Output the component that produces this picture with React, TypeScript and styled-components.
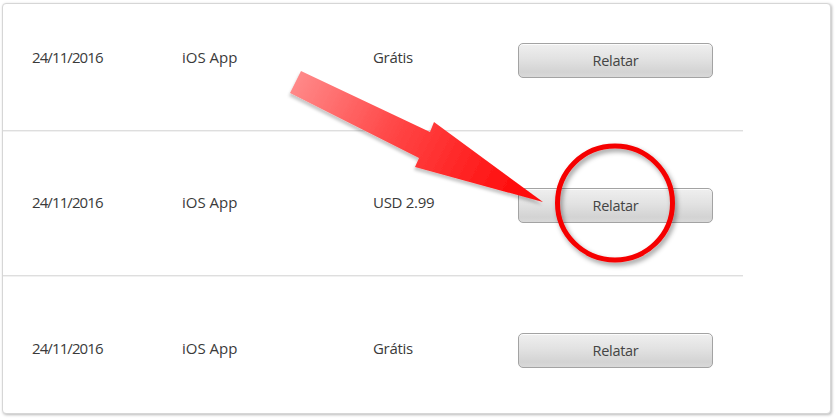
import React from "react";
import styled, { createGlobalStyle } from "styled-components";

const Global = createGlobalStyle`
  html, body { margin: 0; padding: 0; background: #ffffff; }
  body { width: 836px; height: 419px; overflow: hidden; font-family: "Open Sans", "Noto Sans", sans-serif; }
`;

const Stage = styled.div`
  position: relative;
  width: 836px;
  height: 419px;
  padding: 3px 0 0 2px;
  box-sizing: border-box;
`;

const Card = styled.div`
  width: 829px;
  height: 411px;
  box-sizing: border-box;
  background: #fff;
  border: 1px solid #d6d6d6;
  border-radius: 4px;
  box-shadow: 1px 1px 3px rgba(0, 0, 0, 0.28);
  overflow: hidden;
`;

const List = styled.div`
  display: flex;
  flex-direction: column;
  margin-top: -18px;
`;

const Row = styled.div<{ $last?: boolean }>`
  display: grid;
  grid-template-columns: 150px 191px 145px 195px;
  align-items: center;
  width: 740px;
  height: 145px;
  box-sizing: border-box;
  padding: 4px 0 0 29px;
  border-bottom: ${(p) => (p.$last ? "none" : "1px solid #dedede")};
  box-shadow: ${(p) => (p.$last ? "none" : "0 1px 0 #f1f1f1")};
`;

const Cell = styled.div<{ $spacing?: number }>`
  font-size: 15px;
  letter-spacing: ${(p) => p.$spacing ?? 0}px;
  color: #3a3a3a;
  margin-bottom: 6px;
  white-space: nowrap;
`;

const ReportButton = styled.button`
  width: 195px;
  height: 35px;
  box-sizing: border-box;
  border: 1px solid #a3a3a3;
  border-radius: 5px;
  background: linear-gradient(to bottom, #efefef 0%, #e2e2e2 45%, #d3d3d3 85%, #d9d9d9 100%);
  box-shadow: inset 0 1px 0 rgba(255, 255, 255, 0.8);
  font-family: "Open Sans", "Noto Sans", sans-serif;
  font-size: 14.5px;
  letter-spacing: -0.3px;
  color: #444;
  padding: 0;
  cursor: pointer;
`;

const Overlay = styled.svg`
  position: absolute;
  left: 0;
  top: 0;
  pointer-events: none;
`;

const rows = [
  { date: "24/11/2016", kind: "iOS App", price: "Grátis" },
  { date: "24/11/2016", kind: "iOS App", price: "USD 2.99" },
  { date: "24/11/2016", kind: "iOS App", price: "Grátis" },
];

export default function App() {
  return (
    <>
      <Global />
      <Stage>
        <Card>
          <List>
            {rows.map((r, i) => (
              <Row key={i} $last={i === rows.length - 1}>
                <Cell $spacing={-0.9}>{r.date}</Cell>
                <Cell>{r.kind}</Cell>
                <Cell $spacing={-0.3}>{r.price}</Cell>
                <ReportButton>Relatar</ReportButton>
              </Row>
            ))}
          </List>
        </Card>
        <Overlay width="836" height="419" viewBox="0 0 836 419">
          <defs>
            <linearGradient id="arrowGrad" gradientUnits="userSpaceOnUse" x1="295" y1="78" x2="520" y2="195">
              <stop offset="0" stopColor="#ff8a8a" />
              <stop offset="0.45" stopColor="#ff4545" />
              <stop offset="1" stopColor="#ff0a0a" />
            </linearGradient>
            <filter id="arrowShadow" x="-20%" y="-20%" width="140%" height="140%">
              <feDropShadow dx="-1" dy="3" stdDeviation="1.5" floodColor="#000" floodOpacity="0.22" />
            </filter>
            <filter id="ringShadow" x="-20%" y="-20%" width="140%" height="140%">
              <feDropShadow dx="2" dy="3" stdDeviation="2.5" floodColor="#000" floodOpacity="0.4" />
            </filter>
          </defs>
          <polygon
            points="301,71 430,132 434,122 543,202 415,167 419,158 290,93"
            fill="url(#arrowGrad)"
            filter="url(#arrowShadow)"
          />
          <ellipse
            cx="615"
            cy="203"
            rx="57.5"
            ry="57"
            fill="none"
            stroke="#f50000"
            strokeWidth="5"
            filter="url(#ringShadow)"
          />
        </Overlay>
      </Stage>
    </>
  );
}
